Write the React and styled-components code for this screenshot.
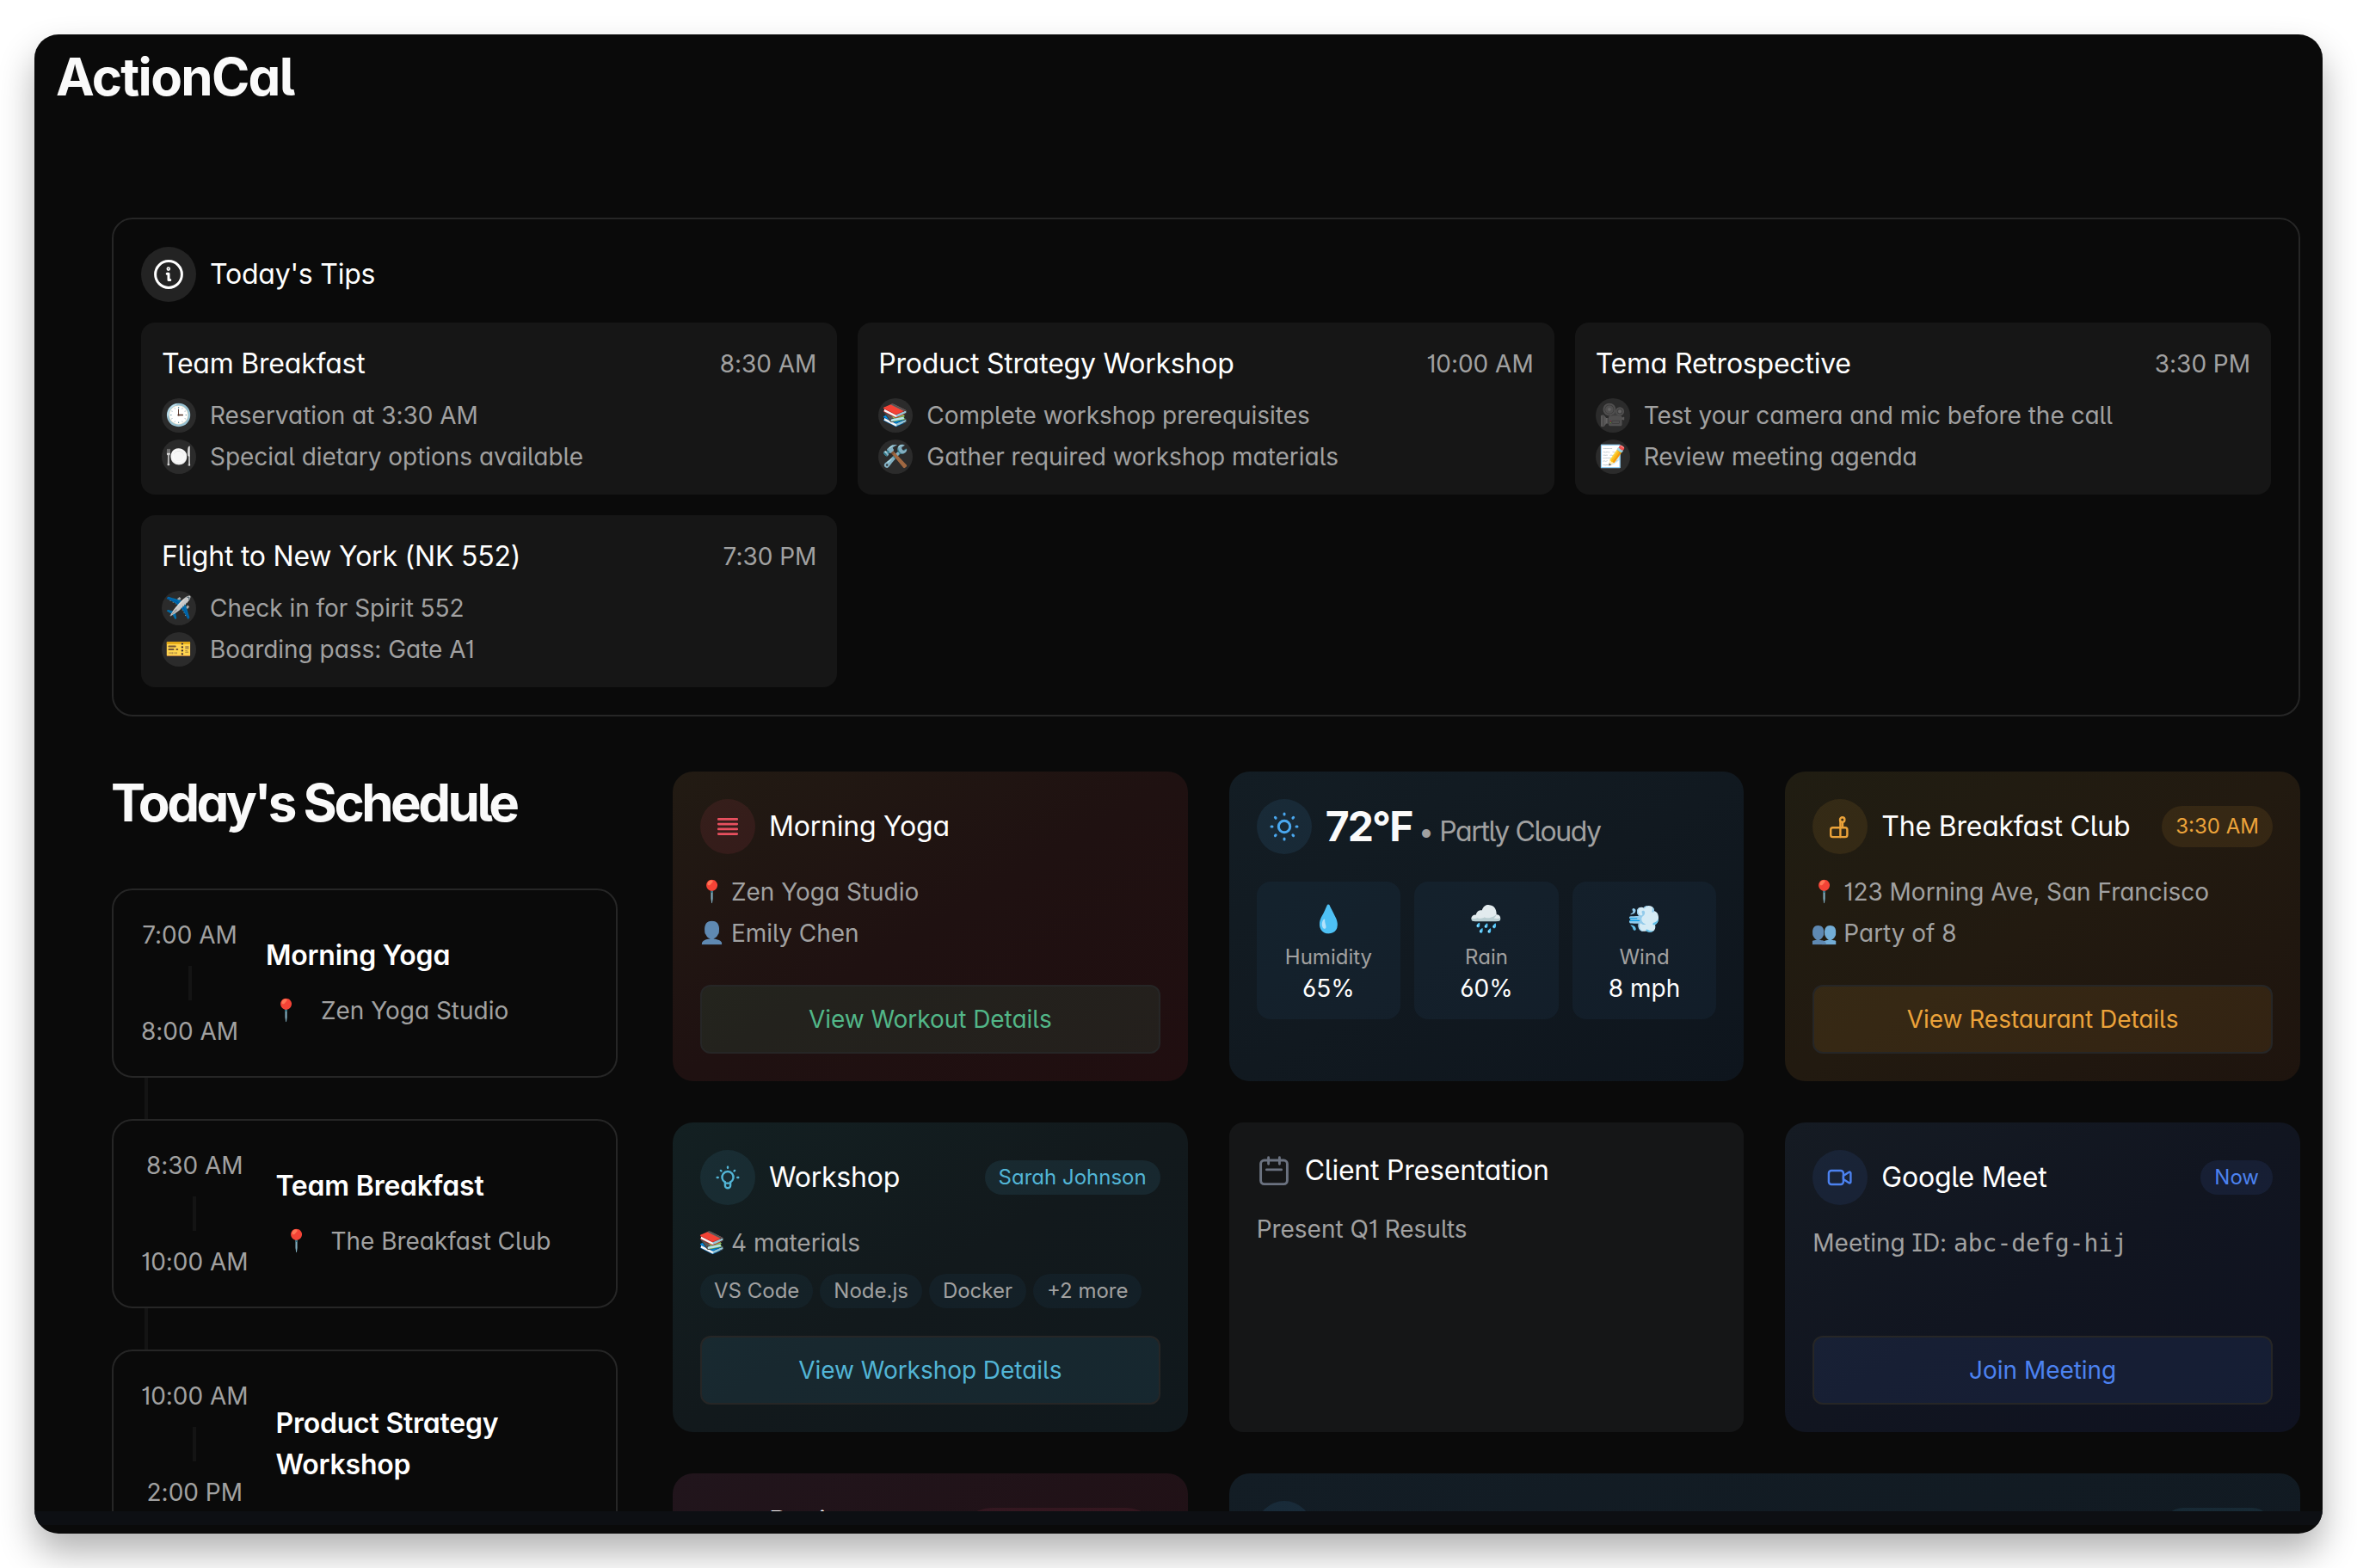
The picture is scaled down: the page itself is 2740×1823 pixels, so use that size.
import React from "react";
import styled, { createGlobalStyle, css } from "styled-components";

const ink = "#ffffff";
const muted = "#a1a1a1";
const line = "#262626";

const accents = {
  red: "232, 80, 95",
  sky: "74, 168, 240",
  amber: "236, 163, 58",
  cyan: "82, 181, 214",
  blue: "76, 130, 240",
  green: "82, 183, 136",
  rose: "225, 70, 110",
};

const GlobalStyle = createGlobalStyle`
  *, *::before, *::after { box-sizing: border-box; }
  body {
    margin: 0;
    background: #ffffff;
    font-family: Inter, "Liberation Sans", sans-serif;
    font-feature-settings: "cv01", "cv02", "cv03", "cv04", "cv05", "cv08", "cv11";
    -webkit-font-smoothing: antialiased;
  }
  h1, h2, h3, p { margin: 0; font-weight: 400; }
`;

const Desktop = styled.div`
  height: 1823px;
  padding: 40px;
  overflow: hidden;
`;

const Window = styled.div`
  height: 1743px;
  display: flex;
  flex-direction: column;
  border-radius: 28px;
  overflow: hidden;
  background: #0a0a0a;
  color: ${ink};
  box-shadow: 0 22px 42px rgba(0, 0, 0, 0.3);
`;

const Viewport = styled.main`
  height: 1717px;
  flex: none;
  overflow: hidden;
`;

const Dock = styled.div`
  height: 16px;
  flex: none;
  background: #0d0f13;
`;

const Brand = styled.h1`
  height: 213px;
  padding: 19px 0 0 25px;
  font-size: 60px;
  line-height: 60px;
  font-weight: 700;
  letter-spacing: -1.7px;
  color: #fafafa;
`;

const Page = styled.div`
  display: flex;
  flex-direction: column;
  gap: 64px;
  padding: 0 26px 0 90px;
`;

const TipsPanel = styled.section`
  display: flex;
  flex-direction: column;
  gap: 24px;
  padding: 32px;
  border: 2px solid ${line};
  border-radius: 24px;
`;

const Row = styled.div`
  display: flex;
  align-items: center;
  gap: ${(p) => p.$gap ?? 16}px;
  min-width: 0;
`;

const Title = styled.h3`
  font-size: 32px;
  line-height: 48px;
  font-weight: ${(p) => (p.$strong ? 600 : 400)};
  letter-spacing: -0.22px;
`;

const TipGrid = styled.div`
  display: grid;
  grid-template-columns: repeat(3, 1fr);
  gap: 24px;
`;

const TipCard = styled.article`
  display: flex;
  flex-direction: column;
  gap: 8px;
  height: 200px;
  padding: 24px;
  border-radius: 16px;
  background: #161616;
`;

const TipHead = styled.header`
  display: flex;
  justify-content: space-between;
  align-items: center;
  margin-bottom: 8px;
`;

const Text = styled.p`
  font-size: 28px;
  line-height: 40px;
  letter-spacing: -0.03px;
  color: ${muted};
  white-space: nowrap;
`;

const Mono = styled.span`
  font-family: "DejaVu Sans Mono", monospace;
  font-size: 28px;
  line-height: 1;
`;

const Disc = styled.span`
  width: ${(p) => p.$size}px;
  height: ${(p) => p.$size}px;
  flex: none;
  display: flex;
  align-items: center;
  justify-content: center;
  border-radius: 50%;
  background: ${(p) => p.$bg || "transparent"};
  color: ${(p) => p.$ink || ink};
`;

const Emoji = styled.span`
  width: 28px;
  flex: none;
  display: flex;
  justify-content: center;
  font-family: "Noto Color Emoji", sans-serif;
  font-size: ${(p) => p.$size || 25}px;
  line-height: ${(p) => p.$line || 40}px;
  ${(p) => p.$soft && css`filter: saturate(0.36) brightness(1.25);`}
`;

const Columns = styled.div`
  display: grid;
  grid-template-columns: 588px 1fr;
  gap: 64px;
  align-items: start;
`;

const ScheduleTitle = styled.h2`
  height: 136px;
  margin-left: -1px;
  font-size: 60px;
  line-height: 72px;
  font-weight: 700;
  letter-spacing: -3.5px;
  color: #fafafa;
`;

const ScheduleCard = styled.article`
  display: flex;
  align-items: center;
  gap: 32px;
  height: 220px;
  padding: 0 32px;
  border: 2px solid ${line};
  border-radius: 24px;
`;

const Link = styled.div`
  width: 4px;
  height: ${(p) => p.$h}px;
  margin-left: ${(p) => p.$left || 0}px;
  background: #141414;
`;

const Times = styled.div`
  flex: none;
  display: flex;
  flex-direction: column;
  align-items: center;
  gap: 16px;
`;

const Details = styled.div`
  display: flex;
  flex-direction: column;
  gap: 16px;
`;

const EventGrid = styled.div`
  display: grid;
  grid-template-columns: repeat(3, 1fr);
  grid-auto-rows: 360px;
  gap: 48px;
`;

const EventCard = styled.article`
  display: flex;
  flex-direction: column;
  padding: 32px;
  border-radius: ${(p) => p.$radius || 24}px;
  background: ${(p) => p.$bg};
  grid-column: span ${(p) => p.$span || 1};
`;

const EventHead = styled.header`
  display: flex;
  align-items: center;
  justify-content: space-between;
  gap: 16px;
  margin-bottom: ${(p) => p.$below ?? 24}px;
`;

const Lines = styled.div`
  display: flex;
  flex-direction: column;
  gap: 8px;
`;

const Pill = styled.span`
  flex: none;
  min-width: ${(p) => p.$w || 0}px;
  min-height: ${(p) => p.$h || 40}px;
  padding: 0 16px;
  display: inline-flex;
  align-items: center;
  border-radius: 999px;
  font-size: 24px;
  line-height: 32px;
  white-space: nowrap;
  color: ${(p) => (p.$tone ? `rgb(${accents[p.$tone]})` : muted)};
  background: ${(p) => (p.$tone ? `rgba(${accents[p.$tone]}, 0.1)` : "rgba(60, 130, 190, 0.07)")};
`;

const Chips = styled.div`
  display: flex;
  gap: 8px;
  margin-top: 16px;
`;

const Button = styled.button`
  height: 80px;
  margin-top: auto;
  border: 2px solid ${line};
  border-radius: 12px;
  font: inherit;
  font-feature-settings: inherit;
  font-size: 28px;
  letter-spacing: -0.04px;
  color: rgb(${(p) => accents[p.$tone]});
  background: rgba(${(p) => accents[p.$tone]}, 0.1);
`;

const Temperature = styled.h3`
  height: 64px;
  font-size: 48px;
  line-height: 63px;
  font-weight: 700;
  letter-spacing: -1.9px;
  color: #fafafa;
  white-space: pre;
`;

const Condition = styled.span`
  font-size: 32px;
  line-height: 1;
  font-weight: 400;
  letter-spacing: -1.4px;
  color: ${muted};
`;

const Tiles = styled.div`
  display: grid;
  grid-template-columns: repeat(3, 1fr);
  gap: 16px;
`;

const Tile = styled.div`
  height: 160px;
  padding: 16px 0;
  display: flex;
  flex-direction: column;
  align-items: center;
  border-radius: 16px;
  background: rgba(70, 150, 220, 0.06);
`;

const TileLabel = styled.span`
  font-size: 24px;
  line-height: 32px;
  color: ${muted};
`;

const TileValue = styled.span`
  font-size: 28px;
  line-height: 40px;
`;

const Icon = ({ size = 32, stroke = 2.4, children }) => (
  <svg width={size} height={size} viewBox={`0 0 ${size} ${size}`} fill="none" stroke="currentColor"
    strokeWidth={stroke} strokeLinecap="round" strokeLinejoin="round">
    {children}
  </svg>
);

const InfoIcon = () => (
  <Icon size={40} stroke={3}>
    <circle cx="20" cy="20" r="15.4" />
    <path d="M18.2 19.2H20V26.4M20 26.4h1.8" stroke={2.8} />
    <circle cx="19.8" cy="13.6" r="0.8" />
  </Icon>
);

const LinesIcon = () => (
  <Icon stroke={2.6}>
    <path d="M5.2 7.4h21.6M5.2 13.1h21.6M5.2 18.9h21.6M5.2 24.6h21.6" />
  </Icon>
);

const SunIcon = () => (
  <Icon size={40} stroke={3}>
    <circle cx="20" cy="20" r="6.7" />
    {[0, 45, 90, 135, 180, 225, 270, 315].map((a) => (
      <path key={a} d="M20 5v1" transform={`rotate(${a} 20 20)`} />
    ))}
  </Icon>
);

const JamIcon = () => (
  <Icon stroke={2.4}>
    <rect x="5.2" y="17.3" width="19.2" height="10.8" rx="2.4" />
    <path d="M16.4 17.3v10.8M16.4 10v7M19 11.5v5.5" />
    <circle cx="18.7" cy="7.9" r="2.7" />
  </Icon>
);

const BulbIcon = () => (
  <Icon stroke={2.4}>
    <path d="M12.9 21.4a6.6 6.6 0 1 1 6.2 0" />
    <path d="M12.9 21.4v3.8a3.1 3.1 0 0 0 6.2 0v-3.8M13 22.6h6" />
    <path d="M16 3.7v1M3.7 16h1M27.3 16h1M7.9 7.9l.6.6M24.1 7.9l-.6.6" />
  </Icon>
);

const CalendarIcon = () => (
  <Icon size={40} stroke={2.9}>
    <rect x="4.6" y="8" width="30.8" height="27.6" rx="4" />
    <path d="M13.6 4.8v7.4M26.4 4.8v7.4M11.4 18.9h17.2" />
  </Icon>
);

const VideoIcon = () => (
  <Icon stroke={2.4}>
    <rect x="2.9" y="8" width="17" height="16" rx="3" />
    <path d="M19.9 14l6.6-4.2a1.2 1.2 0 0 1 1.9 1v10.4a1.2 1.2 0 0 1-1.9 1L19.9 18z" />
  </Icon>
);

const tips = [
  { title: "Team Breakfast", time: "8:30 AM", items: [["🕒", "Reservation at 3:30 AM"], ["🍽️", "Special dietary options available"]] },
  { title: "Product Strategy Workshop", time: "10:00 AM", items: [["📚", "Complete workshop prerequisites"], ["🛠️", "Gather required workshop materials"]] },
  { title: "Tema Retrospective", time: "3:30 PM", items: [["🎥", "Test your camera and mic before the call"], ["📝", "Review meeting agenda"]] },
  { title: "Flight to New York (NK 552)", time: "7:30 PM", items: [["✈️", "Check in for Spirit 552"], ["🎫", "Boarding pass: Gate A1"]] },
];

const schedule = [
  { title: "Morning Yoga", from: "7:00 AM", to: "8:00 AM", place: "Zen Yoga Studio" },
  { title: "Team Breakfast", from: "8:30 AM", to: "10:00 AM", place: "The Breakfast Club" },
  { title: "Product Strategy Workshop", from: "10:00 AM", to: "2:00 PM" },
];

const weather = [["💧", "Humidity", "65%"], ["🌧️", "Rain", "60%"], ["💨", "Wind", "8 mph"]];

const ToneDisc = ({ tone, children }) => (
  <Disc $size={64} $bg={`rgba(${accents[tone]}, 0.1)`} $ink={`rgb(${accents[tone]})`}>{children}</Disc>
);

const IconLine = ({ icon, soft, children }) => (
  <Row $gap={8}>
    <Emoji $soft={soft}>{icon}</Emoji>
    <Text>{children}</Text>
  </Row>
);

export default function App() {
  return (
    <Desktop>
      <GlobalStyle />
      <Window>
        <Viewport>
          <Brand>ActionCal</Brand>
          <Page>
            <TipsPanel>
              <Row>
                <Disc $size={64} $bg="#232323"><InfoIcon /></Disc>
                <Title>Today's Tips</Title>
              </Row>
              <TipGrid>
                {tips.map((tip) => (
                  <TipCard key={tip.title}>
                    <TipHead>
                      <Title>{tip.title}</Title>
                      <Text>{tip.time}</Text>
                    </TipHead>
                    {tip.items.map(([icon, label]) => (
                      <Row key={label}>
                        <Disc $size={40} $bg="#2b2b2b"><Emoji>{icon}</Emoji></Disc>
                        <Text>{label}</Text>
                      </Row>
                    ))}
                  </TipCard>
                ))}
              </TipGrid>
            </TipsPanel>

            <Columns>
              <section>
                <ScheduleTitle>Today's Schedule</ScheduleTitle>
                {schedule.map((item, i) => (
                  <React.Fragment key={item.title}>
                    {i > 0 && <Link $h={48} $left={38} />}
                    <ScheduleCard>
                      <Times>
                        <Text>{item.from}</Text>
                        <Link $h={40} />
                        <Text>{item.to}</Text>
                      </Times>
                      <Details>
                        <Title $strong>{item.title}</Title>
                        {item.place && (
                          <Row>
                            <Disc $size={48}><Emoji>📍</Emoji></Disc>
                            <Text>{item.place}</Text>
                          </Row>
                        )}
                      </Details>
                    </ScheduleCard>
                  </React.Fragment>
                ))}
              </section>

              <EventGrid>
                <EventCard $bg="linear-gradient(to bottom right, #221b13, #1f1111 50%, #200e10)">
                  <EventHead>
                    <Row>
                      <ToneDisc tone="red"><LinesIcon /></ToneDisc>
                      <Title>Morning Yoga</Title>
                    </Row>
                  </EventHead>
                  <Lines>
                    <IconLine icon="📍">Zen Yoga Studio</IconLine>
                    <IconLine icon="👤" soft>Emily Chen</IconLine>
                  </Lines>
                  <Button $tone="green">View Workout Details</Button>
                </EventCard>

                <EventCard $bg="linear-gradient(to bottom right, #131d24, #111920 50%, #0e151d)">
                  <EventHead $below={32}>
                    <Row>
                      <ToneDisc tone="sky"><SunIcon /></ToneDisc>
                      <Temperature>72°F<Condition> • Partly Cloudy</Condition></Temperature>
                    </Row>
                  </EventHead>
                  <Tiles>
                    {weather.map(([icon, label, value]) => (
                      <Tile key={label}>
                        <Emoji $size={31} $line={56}>{icon}</Emoji>
                        <TileLabel>{label}</TileLabel>
                        <TileValue>{value}</TileValue>
                      </Tile>
                    ))}
                  </Tiles>
                </EventCard>

                <EventCard $bg="linear-gradient(to bottom right, #201d12, #221a10 50%, #1e140e)">
                  <EventHead>
                    <Row>
                      <ToneDisc tone="amber"><JamIcon /></ToneDisc>
                      <Title>The Breakfast Club</Title>
                    </Row>
                    <Pill $tone="amber" $h={48}>3:30 AM</Pill>
                  </EventHead>
                  <Lines>
                    <IconLine icon="📍">123 Morning Ave, San Francisco</IconLine>
                    <IconLine icon="👥" soft>Party of 8</IconLine>
                  </Lines>
                  <Button $tone="amber">View Restaurant Details</Button>
                </EventCard>

                <EventCard $bg="linear-gradient(to bottom right, #132022, #12191c 50%, #10181c)">
                  <EventHead>
                    <Row>
                      <ToneDisc tone="cyan"><BulbIcon /></ToneDisc>
                      <Title>Workshop</Title>
                    </Row>
                    <Pill $tone="cyan">Sarah Johnson</Pill>
                  </EventHead>
                  <IconLine icon="📚">4 materials</IconLine>
                  <Chips>
                    {["VS Code", "Node.js", "Docker", "+2 more"].map((chip) => (
                      <Pill key={chip}>{chip}</Pill>
                    ))}
                  </Chips>
                  <Button $tone="cyan">View Workshop Details</Button>
                </EventCard>

                <EventCard $bg="#151617" $radius={16}>
                  <EventHead>
                    <Row>
                      <Disc $size={40} $ink="#6b7280"><CalendarIcon /></Disc>
                      <Title>Client Presentation</Title>
                    </Row>
                  </EventHead>
                  <Text>Present Q1 Results</Text>
                </EventCard>

                <EventCard $bg="linear-gradient(to bottom right, #151b23, #111520 50%, #0f1220)">
                  <EventHead>
                    <Row>
                      <ToneDisc tone="blue"><VideoIcon /></ToneDisc>
                      <Title>Google Meet</Title>
                    </Row>
                    <Pill $tone="blue">Now</Pill>
                  </EventHead>
                  <Text>Meeting ID: <Mono>abc-defg-hij</Mono></Text>
                  <Button $tone="blue">Join Meeting</Button>
                </EventCard>

                <EventCard $bg="linear-gradient(to bottom right, #21151c, #200e12)">
                  <EventHead>
                    <Row>
                      <ToneDisc tone="rose" />
                      <Title>Design<br />Review</Title>
                    </Row>
                    <Pill $tone="rose" $h={80} $w={236} />
                  </EventHead>
                </EventCard>

                <EventCard $bg="linear-gradient(to bottom right, #131d25, #101820)" $span={2}>
                  <EventHead>
                    <ToneDisc tone="sky" />
                    <Pill $tone="cyan" $h={48} $w={128} />
                  </EventHead>
                </EventCard>
              </EventGrid>
            </Columns>
          </Page>
        </Viewport>
        <Dock />
      </Window>
    </Desktop>
  );
}
